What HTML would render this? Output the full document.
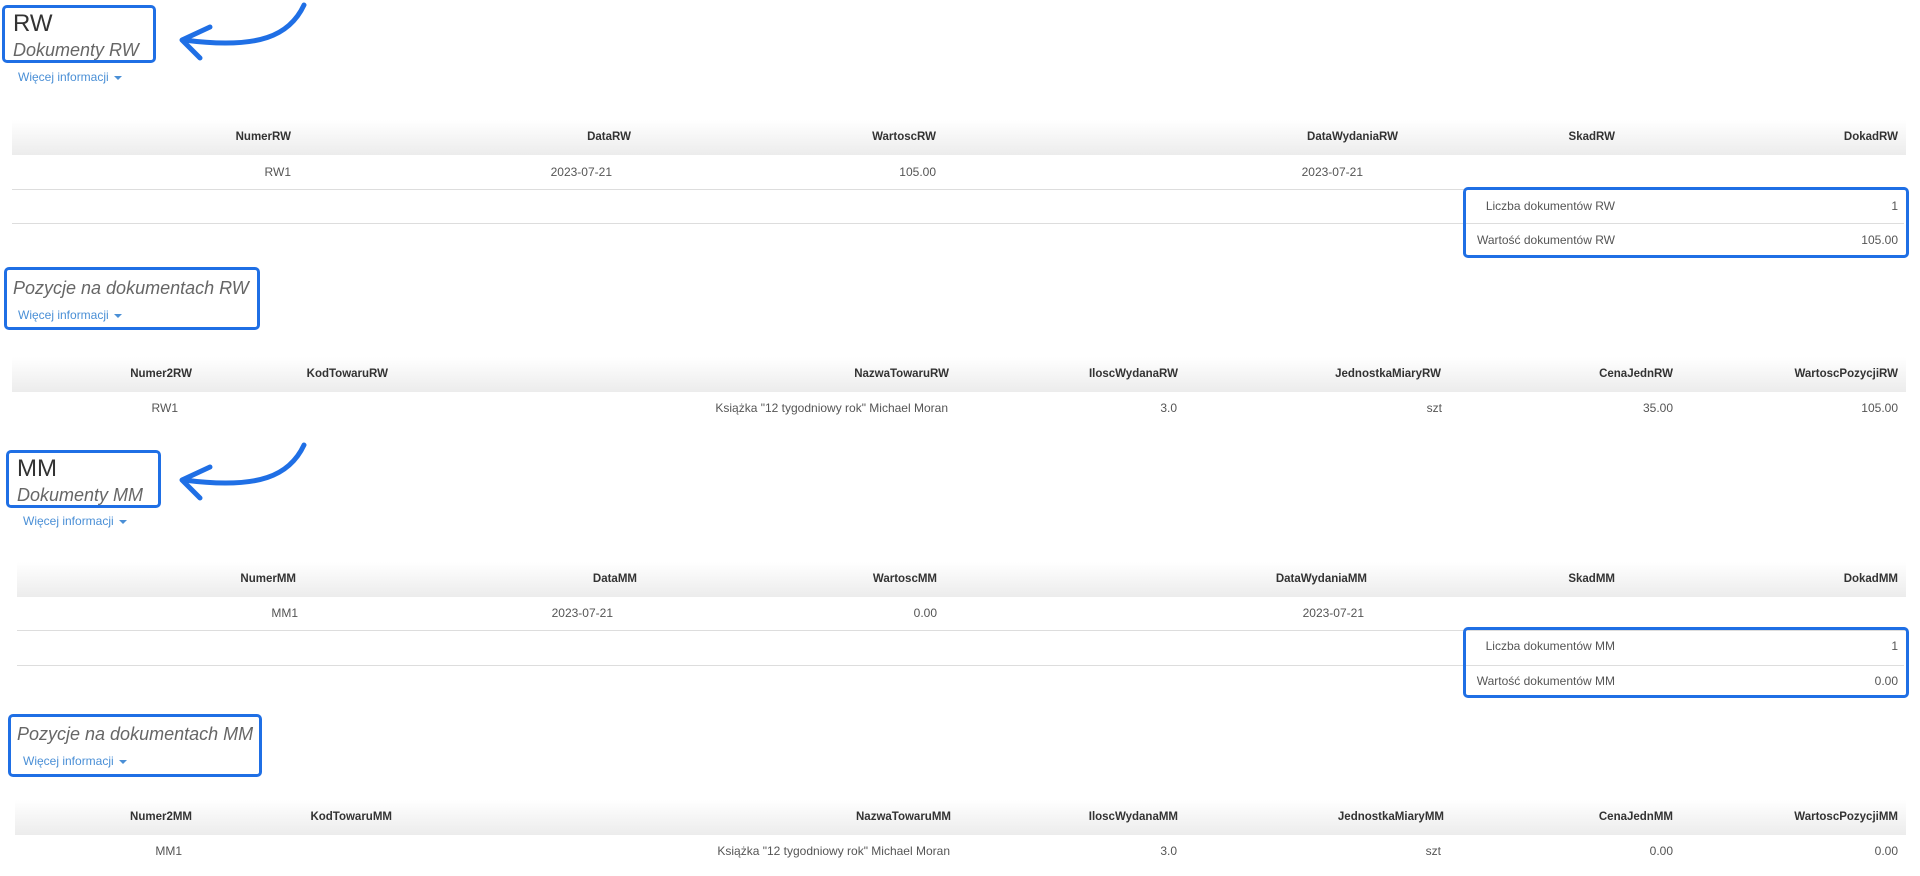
<!DOCTYPE html>
<html><head><meta charset="utf-8"><style>
body{margin:0;width:1920px;height:876px;position:relative;background:#fff;font-family:"Liberation Sans",Arial,sans-serif;overflow:hidden}
.r{position:absolute;white-space:nowrap;transform:translate(-100%,-50%);font-size:12px;color:#555}
.h{font-weight:bold;color:#333;font-size:11.5px}
.hb{position:absolute;background:linear-gradient(#fff,#ececec)}
.ln{position:absolute;height:1px;background:#ddd}
.box{position:absolute;border:3px solid #1f6fe5;border-radius:5px;box-sizing:border-box}
.t{position:absolute;white-space:nowrap}
.more{position:absolute;color:#4a8fd6;font-size:12px;white-space:nowrap}
.more:after{content:"";display:inline-block;margin-left:5px;border-left:4px solid transparent;border-right:4px solid transparent;border-top:4px solid #4a8fd6;vertical-align:middle}
</style></head><body>

<!-- RW -->
<div class="box" style="left:2px;top:5px;width:154px;height:58px"></div>
<div class="t" style="left:13px;top:10px;font-size:24px;color:#333">RW</div>
<div class="t" style="left:13px;top:40px;font-size:18px;color:#666;font-style:italic">Dokumenty RW</div>
<svg style="position:absolute;left:170px;top:0" width="140" height="70"><path d="M134 5 C120 35 90 50 14 40" fill="none" stroke="#1f6fe5" stroke-width="5" stroke-linecap="round"/><path d="M40 27 L12 40 L30 58" fill="none" stroke="#1f6fe5" stroke-width="5" stroke-linecap="round" stroke-linejoin="round"/></svg>
<div class="more" style="left:18px;top:70px">Więcej informacji</div>

<div class="hb" style="left:12px;top:120px;width:1894px;height:35px"></div>
<div class="r h" style="left:291px;top:137px">NumerRW</div>
<div class="r h" style="left:631px;top:137px">DataRW</div>
<div class="r h" style="left:936px;top:137px">WartoscRW</div>
<div class="r h" style="left:1398px;top:137px">DataWydaniaRW</div>
<div class="r h" style="left:1615px;top:137px">SkadRW</div>
<div class="r h" style="left:1898px;top:137px">DokadRW</div>
<div class="r" style="left:291px;top:172px">RW1</div>
<div class="r" style="left:612px;top:172px">2023-07-21</div>
<div class="r" style="left:936px;top:172px">105.00</div>
<div class="r" style="left:1363px;top:172px">2023-07-21</div>
<div class="ln" style="left:12px;top:189px;width:1894px"></div>
<div class="ln" style="left:12px;top:223px;width:1460px"></div>
<div class="ln" style="left:1466px;top:223px;width:438px"></div>
<div class="box" style="left:1463px;top:187px;width:446px;height:71px"></div>
<div class="r" style="left:1615px;top:206px">Liczba dokumentów RW</div>
<div class="r" style="left:1898px;top:206px">1</div>
<div class="r" style="left:1615px;top:240px">Wartość dokumentów RW</div>
<div class="r" style="left:1898px;top:240px">105.00</div>

<div class="box" style="left:4px;top:267px;width:256px;height:63px"></div>
<div class="t" style="left:13px;top:278px;font-size:18px;color:#666;font-style:italic">Pozycje na dokumentach RW</div>
<div class="more" style="left:18px;top:308px">Więcej informacji</div>
<div class="hb" style="left:12px;top:357px;width:1894px;height:35px"></div>
<div class="r h" style="left:192px;top:374px">Numer2RW</div>
<div class="r h" style="left:388px;top:374px">KodTowaruRW</div>
<div class="r h" style="left:949px;top:374px">NazwaTowaruRW</div>
<div class="r h" style="left:1178px;top:374px">IloscWydanaRW</div>
<div class="r h" style="left:1441px;top:374px">JednostkaMiaryRW</div>
<div class="r h" style="left:1673px;top:374px">CenaJednRW</div>
<div class="r h" style="left:1898px;top:374px">WartoscPozycjiRW</div>
<div class="r" style="left:178px;top:408px">RW1</div>
<div class="r" style="left:948px;top:408px">Książka "12 tygodniowy rok" Michael Moran</div>
<div class="r" style="left:1177px;top:408px">3.0</div>
<div class="r" style="left:1442px;top:408px">szt</div>
<div class="r" style="left:1673px;top:408px">35.00</div>
<div class="r" style="left:1898px;top:408px">105.00</div>

<!-- MM -->
<div class="box" style="left:6px;top:450px;width:155px;height:58px"></div>
<div class="t" style="left:17px;top:455px;font-size:24px;color:#333">MM</div>
<div class="t" style="left:17px;top:485px;font-size:18px;color:#666;font-style:italic">Dokumenty MM</div>
<svg style="position:absolute;left:170px;top:440px" width="140" height="70"><path d="M134 5 C120 35 90 50 14 40" fill="none" stroke="#1f6fe5" stroke-width="5" stroke-linecap="round"/><path d="M40 27 L12 40 L30 58" fill="none" stroke="#1f6fe5" stroke-width="5" stroke-linecap="round" stroke-linejoin="round"/></svg>
<div class="more" style="left:23px;top:514px">Więcej informacji</div>

<div class="hb" style="left:17px;top:562px;width:1889px;height:35px"></div>
<div class="r h" style="left:296px;top:579px">NumerMM</div>
<div class="r h" style="left:637px;top:579px">DataMM</div>
<div class="r h" style="left:937px;top:579px">WartoscMM</div>
<div class="r h" style="left:1367px;top:579px">DataWydaniaMM</div>
<div class="r h" style="left:1615px;top:579px">SkadMM</div>
<div class="r h" style="left:1898px;top:579px">DokadMM</div>
<div class="r" style="left:298px;top:613px">MM1</div>
<div class="r" style="left:613px;top:613px">2023-07-21</div>
<div class="r" style="left:937px;top:613px">0.00</div>
<div class="r" style="left:1364px;top:613px">2023-07-21</div>
<div class="ln" style="left:17px;top:630px;width:1889px"></div>
<div class="ln" style="left:17px;top:665px;width:1455px"></div>
<div class="ln" style="left:1466px;top:665px;width:438px"></div>
<div class="box" style="left:1463px;top:627px;width:446px;height:71px"></div>
<div class="r" style="left:1615px;top:646px">Liczba dokumentów MM</div>
<div class="r" style="left:1898px;top:646px">1</div>
<div class="r" style="left:1615px;top:681px">Wartość dokumentów MM</div>
<div class="r" style="left:1898px;top:681px">0.00</div>

<div class="box" style="left:8px;top:714px;width:254px;height:63px"></div>
<div class="t" style="left:17px;top:724px;font-size:18px;color:#666;font-style:italic">Pozycje na dokumentach MM</div>
<div class="more" style="left:23px;top:754px">Więcej informacji</div>
<div class="hb" style="left:15px;top:800px;width:1891px;height:35px"></div>
<div class="r h" style="left:192px;top:817px">Numer2MM</div>
<div class="r h" style="left:392px;top:817px">KodTowaruMM</div>
<div class="r h" style="left:951px;top:817px">NazwaTowaruMM</div>
<div class="r h" style="left:1178px;top:817px">IloscWydanaMM</div>
<div class="r h" style="left:1444px;top:817px">JednostkaMiaryMM</div>
<div class="r h" style="left:1673px;top:817px">CenaJednMM</div>
<div class="r h" style="left:1898px;top:817px">WartoscPozycjiMM</div>
<div class="r" style="left:182px;top:851px">MM1</div>
<div class="r" style="left:950px;top:851px">Książka "12 tygodniowy rok" Michael Moran</div>
<div class="r" style="left:1177px;top:851px">3.0</div>
<div class="r" style="left:1441px;top:851px">szt</div>
<div class="r" style="left:1673px;top:851px">0.00</div>
<div class="r" style="left:1898px;top:851px">0.00</div>
</body></html>
